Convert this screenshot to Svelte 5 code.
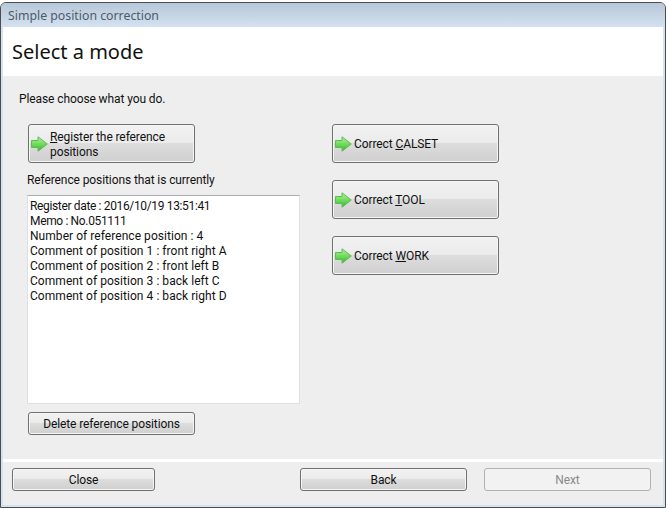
<script>
  const lines = [
    { text: 'Register date : 2016/10/19 13:51:41', tight: true },
    { text: 'Memo : No.051111', tight: true },
    { text: 'Number of reference position : 4' },
    { text: 'Comment of position 1 : front right A' },
    { text: 'Comment of position 2 : front left B' },
    { text: 'Comment of position 3 : back left C' },
    { text: 'Comment of position 4 : back right D' }
  ];
  const modes = [
    { before: 'Correct ', key: 'C', after: 'ALSET' },
    { before: 'Correct ', key: 'T', after: 'OOL' },
    { before: 'Correct ', key: 'W', after: 'ORK' }
  ];
</script>

{#snippet arrow()}
  <svg class="arrow" width="17" height="16" viewBox="0 0 17 16" aria-hidden="true">
    <defs>
      <linearGradient id="arrowFill" x1="0" y1="0" x2="0" y2="1">
        <stop offset="0" stop-color="#b4f29c" />
        <stop offset="0.5" stop-color="#6fdc5c" />
        <stop offset="1" stop-color="#3fb337" />
      </linearGradient>
    </defs>
    <path d="M0.5 4.5H7V0.8L16.3 8L7 15.2V11.5H0.5Z" fill="url(#arrowFill)" stroke="#63b85a" stroke-width="1" stroke-linejoin="round" />
  </svg>
{/snippet}

<div class="window">
  <div class="titlebar">Simple position correction</div>
  <header class="heading">Select a mode</header>

  <main class="body">
    <p class="prompt">Please choose what you do.</p>
    <div class="columns">
      <section class="left">
        <button class="btn icon-btn tall">
          {@render arrow()}
          <span class="label"><u>R</u>egister the reference<br />positions</span>
        </button>
        <p class="caption">Reference positions that is currently</p>
        <div class="listbox">
          {#each lines as line}
            <div class:tight={line.tight}>{line.text}</div>
          {/each}
        </div>
        <button class="btn delete">Delete reference positions</button>
      </section>
      <section class="right">
        {#each modes as mode}
          <button class="btn icon-btn tall">
            {@render arrow()}
            <span class="label">{mode.before}<u>{mode.key}</u>{mode.after}</span>
          </button>
        {/each}
      </section>
    </div>
  </main>

  <footer class="footer">
    <button class="btn close">Close</button>
    <div class="nav">
      <button class="btn back">Back</button>
      <button class="btn next" disabled>Next</button>
    </div>
  </footer>
</div>

<style>
  :global(body) {
    background: #fff;
    font-family: Roboto, "Liberation Sans", sans-serif;
  }
  .window {
    box-sizing: border-box;
    width: 666px;
    height: 506px;
    margin-top: 2px;
    border: 1px solid #4a4c50;
    border-radius: 6px 6px 0 0;
    background: #eeeeee;
    padding: 0 2px 2px 2px;
    box-shadow: inset 0 0 0 2px #d5e2ef;
    display: flex;
    flex-direction: column;
    overflow: hidden;
  }
  .titlebar {
    height: 24px;
    margin: 0 -2px;
    padding: 0 7px;
    flex: none;
    font-family: "Noto Sans", sans-serif;
    font-size: 12.3px;
    line-height: 26px;
    color: #4e5a6b;
    background: linear-gradient(#b6c7d8, #d4e2f0);
  }
  .heading {
    height: 49px;
    flex: none;
    padding-left: 9px;
    font-family: "Noto Sans", sans-serif;
    font-size: 20px;
    line-height: 49px;
    color: #111;
    background: #fff;
  }
  .body {
    flex: 1;
    padding: 15px 0 0 16px;
    font-size: 12px;
    letter-spacing: -0.1px;
    color: #111;
  }
  .prompt {
    margin: 0;
    height: 17px;
    line-height: 17px;
  }
  .columns {
    display: flex;
    margin-top: 16px;
  }
  .left {
    width: 313px;
    padding-left: 9px;
    display: flex;
    flex-direction: column;
    align-items: flex-start;
    box-sizing: border-box;
  }
  .right {
    display: flex;
    flex-direction: column;
    gap: 17px;
  }
  .btn {
    box-sizing: border-box;
    width: 167px;
    margin: 0;
    padding: 1px 0 0;
    font: inherit;
    font-size: 12px;
    letter-spacing: -0.1px;
    color: #111;
    border: 1px solid #707070;
    border-radius: 3px;
    background: linear-gradient(#f2f2f2 0, #ebebeb 49%, #dddddd 50%, #cfcfcf 100%);
    box-shadow: inset 0 0 0 1px #f6f6f6;
  }
  .tall {
    height: 39px;
  }
  .icon-btn {
    display: flex;
    align-items: center;
    gap: 2px;
    padding: 0 0 0 2px;
    text-align: left;
    line-height: 15px;
  }
  .label {
    padding-top: 2px;
  }
  .arrow {
    flex: none;
  }
  .caption {
    margin: 9px 0 0 -1px;
    height: 16px;
    line-height: 17px;
  }
  .listbox {
    box-sizing: border-box;
    width: 273px;
    height: 209px;
    margin: 7px 0 0 -1px;
    padding: 3px 2px;
    background: #fff;
    border: 1px solid #dcdfe3;
    border-top-color: #abadb3;
    line-height: 15px;
    letter-spacing: 0.05px;
    white-space: nowrap;
  }
  .tight {
    letter-spacing: -0.35px;
  }
  .delete {
    height: 23px;
    margin-top: 8px;
  }
  .footer {
    flex: none;
    height: 46px;
    border-top: 3px solid #fff;
    box-sizing: border-box;
    display: flex;
    justify-content: space-between;
    padding: 6px 12px 0 9px;
    font-size: 12px;
  }
  .nav {
    display: flex;
    gap: 17px;
  }
  .close {
    width: 143px;
    height: 23px;
  }
  .back,
  .next {
    height: 23px;
  }
  .next {
    color: #8a8a8a;
    background: #f2f2f2;
    border-color: #adb2b5;
    box-shadow: none;
  }
</style>
